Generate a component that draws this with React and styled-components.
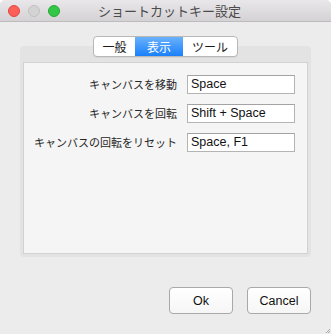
import React from "react";
import styled, { createGlobalStyle } from "styled-components";

const GlobalStyle = createGlobalStyle`
  html, body {
    margin: 0;
    padding: 0;
    background: #ffffff;
  }
  * {
    box-sizing: border-box;
  }
`;

const JP = `"Noto Sans CJK JP", "Noto Sans", sans-serif`;
const LATIN = `"Liberation Sans", Arial, "Noto Sans CJK JP", sans-serif`;

const Window = styled.div`
  position: relative;
  width: 331px;
  height: 334px;
  background: #ececec;
  border-radius: 5px 5px 0 0;
  overflow: hidden;
  display: flex;
  flex-direction: column;
`;

const TitleBar = styled.div`
  height: 22px;
  flex: none;
  display: flex;
  align-items: center;
  padding-left: 8px;
  background: linear-gradient(#e9e7e9, #d4d2d4);
  border-bottom: 1px solid #bdbbbd;
  position: relative;
`;

const Lights = styled.div`
  display: flex;
  gap: 8px;
  margin-top: 1px;
`;

const Light = styled.span`
  width: 12px;
  height: 12px;
  border-radius: 50%;
  background: ${(p) => p.$fill};
  border: 1px solid ${(p) => p.$edge};
`;

const Title = styled.div`
  flex: 1;
  text-align: center;
  margin-right: 52px;
  font-family: ${JP};
  font-size: 13px;
  color: #4b4b4b;
  line-height: 22px;
`;

const Body = styled.div`
  flex: 1;
  display: flex;
  flex-direction: column;
  padding-top: 14px;
`;

const Tabs = styled.div`
  align-self: flex-start;
  margin-left: 93px;
  margin-bottom: -11px;
  height: 21px;
  display: flex;
  background: #ffffff;
  border: 1px solid #b8b8b8;
  border-radius: 4px;
  overflow: hidden;
  position: relative;
  z-index: 1;
  box-shadow: 0 1px 1px rgba(0, 0, 0, 0.06);
`;

const Tab = styled.div`
  width: ${(p) => p.$w}px;
  display: flex;
  align-items: center;
  justify-content: center;
  font-family: ${JP};
  font-size: 12px;
  color: ${(p) => (p.$active ? "#ffffff" : "#1a1a1a")};
  background: ${(p) =>
    p.$active ? "linear-gradient(#6bb2fb, #1980fb)" : "transparent"};
`;

const GroupBox = styled.div`
  margin: 0 20px;
  height: 211px;
  padding: 16px 3px 3px;
  background: #e3e3e3;
  border-radius: 4px;
  display: flex;
`;

const Panel = styled.div`
  flex: 1;
  background: #f5f5f5;
  border: 1px solid #d2d2d2;
  padding: 12px 12px 0 0;
  display: grid;
  grid-template-columns: 1fr 108px;
  grid-auto-rows: 19px;
  column-gap: 10px;
  row-gap: 10px;
  align-content: start;
`;

const Label = styled.div`
  font-family: ${JP};
  font-size: 11px;
  color: #262626;
  text-align: right;
  line-height: 19px;
`;

const Field = styled.div`
  background: #ffffff;
  border: 1px solid #b4b4b4;
  border-top-color: #a3a3a3;
  font-family: ${LATIN};
  font-size: 12.5px;
  color: #111;
  line-height: 17px;
  padding-left: 3px;
`;

const Footer = styled.div`
  display: flex;
  justify-content: flex-end;
  gap: 14px;
  padding: 30px 20px 0 0;
`;

const Button = styled.button`
  width: 64px;
  height: 27px;
  background: linear-gradient(#ffffff, #f6f6f6);
  border: 1px solid #a9a9a9;
  border-radius: 4px;
  font-family: ${LATIN};
  font-size: 12.5px;
  color: #111;
  padding: 0;
`;

const Grip = styled.svg`
  position: absolute;
  right: 1px;
  bottom: 1px;
`;

const rows = [
  ["キャンバスを移動", "Space"],
  ["キャンバスを回転", "Shift + Space"],
  ["キャンバスの回転をリセット", "Space, F1"],
];

export default function App() {
  return (
    <>
      <GlobalStyle />
      <Window>
        <TitleBar>
          <Lights>
            <Light $fill="#fc5f57" $edge="#df4744" />
            <Light $fill="#d3d3d3" $edge="#c1c1c1" />
            <Light $fill="#33c748" $edge="#27a838" />
          </Lights>
          <Title>ショートカットキー設定</Title>
        </TitleBar>
        <Body>
          <Tabs>
            <Tab $w={41}>一般</Tab>
            <Tab $w={48} $active>
              表示
            </Tab>
            <Tab $w={54}>ツール</Tab>
          </Tabs>
          <GroupBox>
            <Panel>
              {rows.map(([label, value]) => (
                <React.Fragment key={label}>
                  <Label>{label}</Label>
                  <Field>{value}</Field>
                </React.Fragment>
              ))}
            </Panel>
          </GroupBox>
          <Footer>
            <Button>Ok</Button>
            <Button>Cancel</Button>
          </Footer>
        </Body>
        <Grip width="4" height="4" viewBox="0 0 4 4">
          <path d="M0 4 L4 0 M2 4 L4 2" stroke="#9a9a9a" strokeWidth="0.8" />
        </Grip>
      </Window>
    </>
  );
}
